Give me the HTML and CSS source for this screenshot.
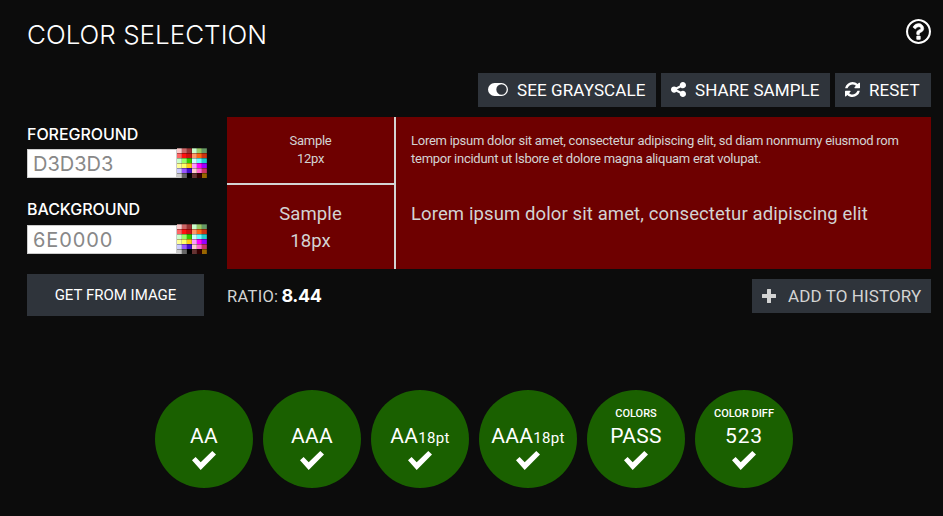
FILE: index.html
```html
<!DOCTYPE html>
<html lang="en">
<head>
<meta charset="utf-8">
<title>Color Selection</title>
<link rel="stylesheet" href="styles.css">
</head>
<body>
<svg class="defs" aria-hidden="true">
  <symbol id="check" viewBox="0 0 24 19"><path d="M0 9.300 3.600 5.900 8.700 11.200 20.300 0 24 3.600 8.700 19z"/></symbol>
  <symbol id="palette" viewBox="0 0 30 30">
    <g><path fill="#fcc" d="M0 0h5v5H0z"/><path fill="#c66" d="M5 0h5v5H5z"/><path fill="#933" d="M10 0h5v5h-5z"/><path fill="#cfc" d="M15 0h5v5h-5z"/><path fill="#9c6" d="M20 0h5v5h-5z"/><path fill="#696" d="M25 0h5v5h-5z"/></g>
    <g><path fill="#f66" d="M0 5h5v5H0z"/><path fill="#f11" d="M5 5h5v5H5z"/><path fill="#c11" d="M10 5h5v5h-5z"/><path fill="#f96" d="M15 5h5v5h-5z"/><path fill="#f61" d="M20 5h5v5h-5z"/><path fill="#c31" d="M25 5h5v5h-5z"/></g>
    <g><path fill="#cfc" d="M0 10h5v5H0z"/><path fill="#9f6" d="M5 10h5v5H5z"/><path fill="#3c0" d="M10 10h5v5h-5z"/><path fill="#cff" d="M15 10h5v5h-5z"/><path fill="#6ff" d="M20 10h5v5h-5z"/><path fill="#2cc" d="M25 10h5v5h-5z"/></g>
    <g><path fill="#ff9" d="M0 15h5v5H0z"/><path fill="#ff6" d="M5 15h5v5H5z"/><path fill="#fc1" d="M10 15h5v5h-5z"/><path fill="#f9f" d="M15 15h5v5h-5z"/><path fill="#f0f" d="M20 15h5v5h-5z"/><path fill="#90f" d="M25 15h5v5h-5z"/></g>
    <g><path fill="#ccf" d="M0 20h5v5H0z"/><path fill="#95f" d="M5 20h5v5H5z"/><path fill="#41c" d="M10 20h5v5h-5z"/><path fill="#fcc" d="M15 20h5v5h-5z"/><path fill="#f6c" d="M20 20h5v5h-5z"/><path fill="#c36" d="M25 20h5v5h-5z"/></g>
    <g><path fill="#ccc" d="M0 25h5v5H0z"/><path fill="#666" d="M5 25h5v5H5z"/><path fill="#000" d="M10 25h5v5h-5z"/><path fill="#633" d="M15 25h5v5h-5z"/><path fill="#300" d="M20 25h5v5h-5z"/><path fill="#960" d="M25 25h5v5h-5z"/></g>
    <path fill="none" stroke="#000" stroke-opacity=".3" d="M0 .5h30M0 5.500h30M0 10.500h30M0 15.500h30M0 20.500h30M0 25.500h30"/>
    <path fill="none" stroke="#000" stroke-opacity=".15" d="M4.500 0v30M9.500 0v30M14.500 0v30M19.500 0v30M24.500 0v30M29.500 0v30"/>
  </symbol>
</svg>
<main class="page">
  <header class="head">
    <h1 class="title">COLOR SELECTION</h1>
    <svg class="help" viewBox="0 0 1536 1536"><path stroke="#fff" stroke-width="35" d="M880 1072v160q0 14-9 23t-23 9H688q-14 0-23-9t-9-23v-160q0-14 9-23t23-9h160q14 0 23 9t9 23zm208-496q0 50-15 90t-45.500 69-52 44-59.500 36q-32 18-46.500 28t-26 24-11.500 29v32q0 14-9 23t-23 9H688q-14 0-23-9t-9-23v-68q0-35 10.500-64.500t24-47.500 39-35.500 41-25.500 44.500-21q53-25 75-43t22-49q0-42-43.500-71.500T773 483q-56 0-95 27-29 20-80 83-9 12-25 12-11 0-19-6L446 516q-10-7-12-19t5-23q122-192 349-192 104 0 202 89.500T1088 576z"/><path d="M768 128q-130 0-248.500 51t-204 136.500-136.500 204T128 768t51 248.500 136.500 204 204 136.500 248.500 51 248.500-51 204-136.500 136.500-204 51-248.500-51-248.500-136.500-204-204-136.500T768 128zm768 640q0 209-103 385.500T1153.500 1433 768 1536t-385.500-103T103 1153.500 0 768t103-385.500T382.500 103 768 0t385.500 103T1433 382.500 1536 768z"/></svg>
  </header>
  <nav class="tools">
    <button class="btn gray"><svg class="toggle" viewBox="0 0 20 13"><path fill-rule="evenodd" d="M6.500 0h7a6.500 6.500 0 0 1 0 13h-7a6.500 6.500 0 0 1 0-13zm7 1.300a5.200 5.200 0 1 0 0 10.400a5.200 5.200 0 0 0 0-10.400z"/></svg><span>SEE GRAYSCALE</span></button>
    <button class="btn share"><svg class="icon" viewBox="0 0 1536 1536"><path d="M1216 896q133 0 226.500 93.500t93.500 226.500-93.500 226.500-226.500 93.500-226.500-93.500-93.500-226.500q0-12 2-34l-360-180q-92 86-218 86-133 0-226.500-93.500T0 768t93.500-226.500T320 448q126 0 218 86l360-180q-2-22-2-34 0-133 93.500-226.500T1216 0t226.500 93.500T1536 320t-93.500 226.500T1216 640q-126 0-218-86L638 734q2 22 2 34t-2 34l360 180q92-86 218-86z"/></svg><span>SHARE SAMPLE</span></button>
    <button class="btn reset"><svg class="icon" viewBox="0 0 1536 1536"><path d="M1511 928q0 5-1 7-64 268-268 434.500T764 1536q-146 0-282.500-55T238 1324l-129 129q-19 19-45 19t-45-19-19-45V960q0-26 19-45t45-19h448q26 0 45 19t19 45-19 45l-137 137q71 66 161 102t187 36q134 0 250-65t186-179q11-17 53-117 8-23 30-23h192q13 0 22.500 9.500T1511 928zm25-800v448q0 26-19 45t-45 19h-448q-26 0-45-19t-19-45 19-45l138-138Q969 256 768 256q-134 0-250 65T332 500q-11 17-53 117-8 23-30 23H50q-13 0-22.500-9.500T18 608v-7q65-268 270-434.500T768 0q146 0 284 55.500T1297 212l130-129q19-19 45-19t45 19 19 45z"/></svg><span>RESET</span></button>
  </nav>
  <div class="main">
    <section class="side">
      <div class="label">FOREGROUND</div>
      <div class="field"><div class="box">D3D3D3</div><svg class="palette"><use href="#palette"/></svg></div>
      <div class="label second">BACKGROUND</div>
      <div class="field"><div class="box zeros">6E0000</div><svg class="palette"><use href="#palette"/></svg></div>
      <button class="from-image">GET FROM IMAGE</button>
    </section>
    <section class="preview">
      <div class="sample">
        <div class="sizes">
          <div class="small">Sample<br>12px</div>
          <div class="large">Sample<br>18px</div>
        </div>
        <div class="copy">
          <p class="small">Lorem ipsum dolor sit amet, consectetur adipiscing elit, sd diam nonmumy eiusmod rom<br>tempor incidunt ut lsbore et dolore magna aliquam erat volupat.</p>
          <p class="large">Lorem ipsum dolor sit amet, consectetur adipiscing elit</p>
        </div>
      </div>
      <div class="foot">
        <div class="ratio"><span>RATIO:</span><b>8.44</b></div>
        <button class="btn add"><svg class="plus" viewBox="0 0 14 14"><path d="M5 .5Q5 0 5.500 0h3Q9 0 9 .5V5h4.500q.5 0 .5.500v3q0 .5-.5.500H9v4.500q0 .5-.5.500h-3q-.5 0-.5-.5V9H.5Q0 9 0 8.500v-3Q0 5 .5 5H5z"/></svg><span>ADD TO HISTORY</span></button>
      </div>
    </section>
  </div>
  <div class="results">
    <div class="result"><div class="kind"></div><div class="value">AA</div><svg class="check"><use href="#check"/></svg></div>
    <div class="result"><div class="kind"></div><div class="value">AAA</div><svg class="check"><use href="#check"/></svg></div>
    <div class="result"><div class="kind"></div><div class="value">AA<small>18pt</small></div><svg class="check"><use href="#check"/></svg></div>
    <div class="result"><div class="kind"></div><div class="value">AAA<small>18pt</small></div><svg class="check"><use href="#check"/></svg></div>
    <div class="result"><div class="kind">COLORS</div><div class="value">PASS</div><svg class="check"><use href="#check"/></svg></div>
    <div class="result"><div class="kind">COLOR DIFF</div><div class="value wide">523</div><svg class="check"><use href="#check"/></svg></div>
  </div>
</main>
</body>
</html>
```
FILE: styles.css
```css
* { box-sizing: border-box; }
body { margin: 0; background: #0c0c0c; color: #fff; font-family: Roboto, sans-serif; white-space: nowrap; }
svg { display: block; flex: none; fill: currentColor; }
.defs { position: absolute; width: 0; height: 0; }
.page { height: 516px; padding: 19px 12px 0 27px; overflow: hidden; }
.head { display: flex; justify-content: space-between; height: 54px; }
.title { margin: 0; font: 300 26px/32px Inter, sans-serif; }
.help { width: 25px; height: 25px; }
.tools { display: flex; justify-content: flex-end; gap: 5px; height: 44px; }
button { border: 0; padding: 0; color: inherit; background: #2f343b; font-family: inherit; }
.btn { display: flex; align-items: center; height: 34px; padding: 0 0 1px 10px; font-size: 17px; line-height: 32px; letter-spacing: .1px; }
.gray { width: 178px; }
.share { width: 169px; }
.reset { width: 96px; }
.toggle { width: 20px; height: 13px; margin-right: 9px; }
.icon { width: 15px; height: 15px; margin-right: 9px; }
.main { display: flex; height: 273px; }
.side { width: 200px; }
.label { height: 31px; padding-top: 7px; font: 450 16px/20px Inter, sans-serif; letter-spacing: -.05px; }
.second { height: 32px; }
.field { display: flex; align-items: flex-end; width: 180px; height: 30px; margin-bottom: 14px; }
.box { width: 150px; height: 29px; border: 1px solid #ccc; padding-left: 5px; background: #fff; color: #888; font: 20px/28px Inter, sans-serif; }
.zeros { letter-spacing: .9px; }
.palette { width: 30px; height: 30px; }
.from-image { display: block; width: 177px; height: 42px; margin-top: 20px; font-size: 15px; }
.preview { width: 704px; }
.sample { display: flex; height: 152px; background: #6e0000; color: #d3d3d3; }
.sizes { width: 169px; border-right: 2px solid #d3d3d3; text-align: center; }
.sizes .small { height: 68px; border-bottom: 2px solid #d3d3d3; padding-top: 15px; }
.small { font-size: 13px; line-height: 18px; letter-spacing: -.26px; }
.large { font-size: 18.5px; line-height: 27px; letter-spacing: .11px; }
.sizes .large { padding-top: 16px; }
.copy { padding-left: 15px; }
.copy p { margin: 0; }
.copy .small { height: 68px; padding-top: 15px; }
.copy .large { padding-top: 16px; }
.foot { display: flex; justify-content: space-between; padding-top: 10px; }
.ratio { display: flex; align-items: baseline; gap: 3px; height: 34px; color: #d3d3d3; font-size: 16.5px; line-height: 34px; letter-spacing: .3px; }
.ratio b { color: #fff; font: 700 18px/34px Inter, sans-serif; letter-spacing: -.4px; }
.add { width: 179px; color: #d3d3d3; }
.plus { width: 14px; height: 14px; margin-right: 12px; }
.results { display: flex; gap: 10px; padding-left: 128px; }
.result { display: flex; flex-direction: column; align-items: center; width: 98px; height: 98px; padding-top: 16px; border-radius: 50%; background: #1a6000; }
.kind { height: 14px; font-size: 11px; font-weight: 500; line-height: 15px; }
.value { height: 32px; font-size: 21px; line-height: 32px; letter-spacing: .3px; }
.wide { letter-spacing: .8px; }
.value small { font-size: 15px; }
.check { width: 24px; height: 19px; margin-top: -1px; }
```
